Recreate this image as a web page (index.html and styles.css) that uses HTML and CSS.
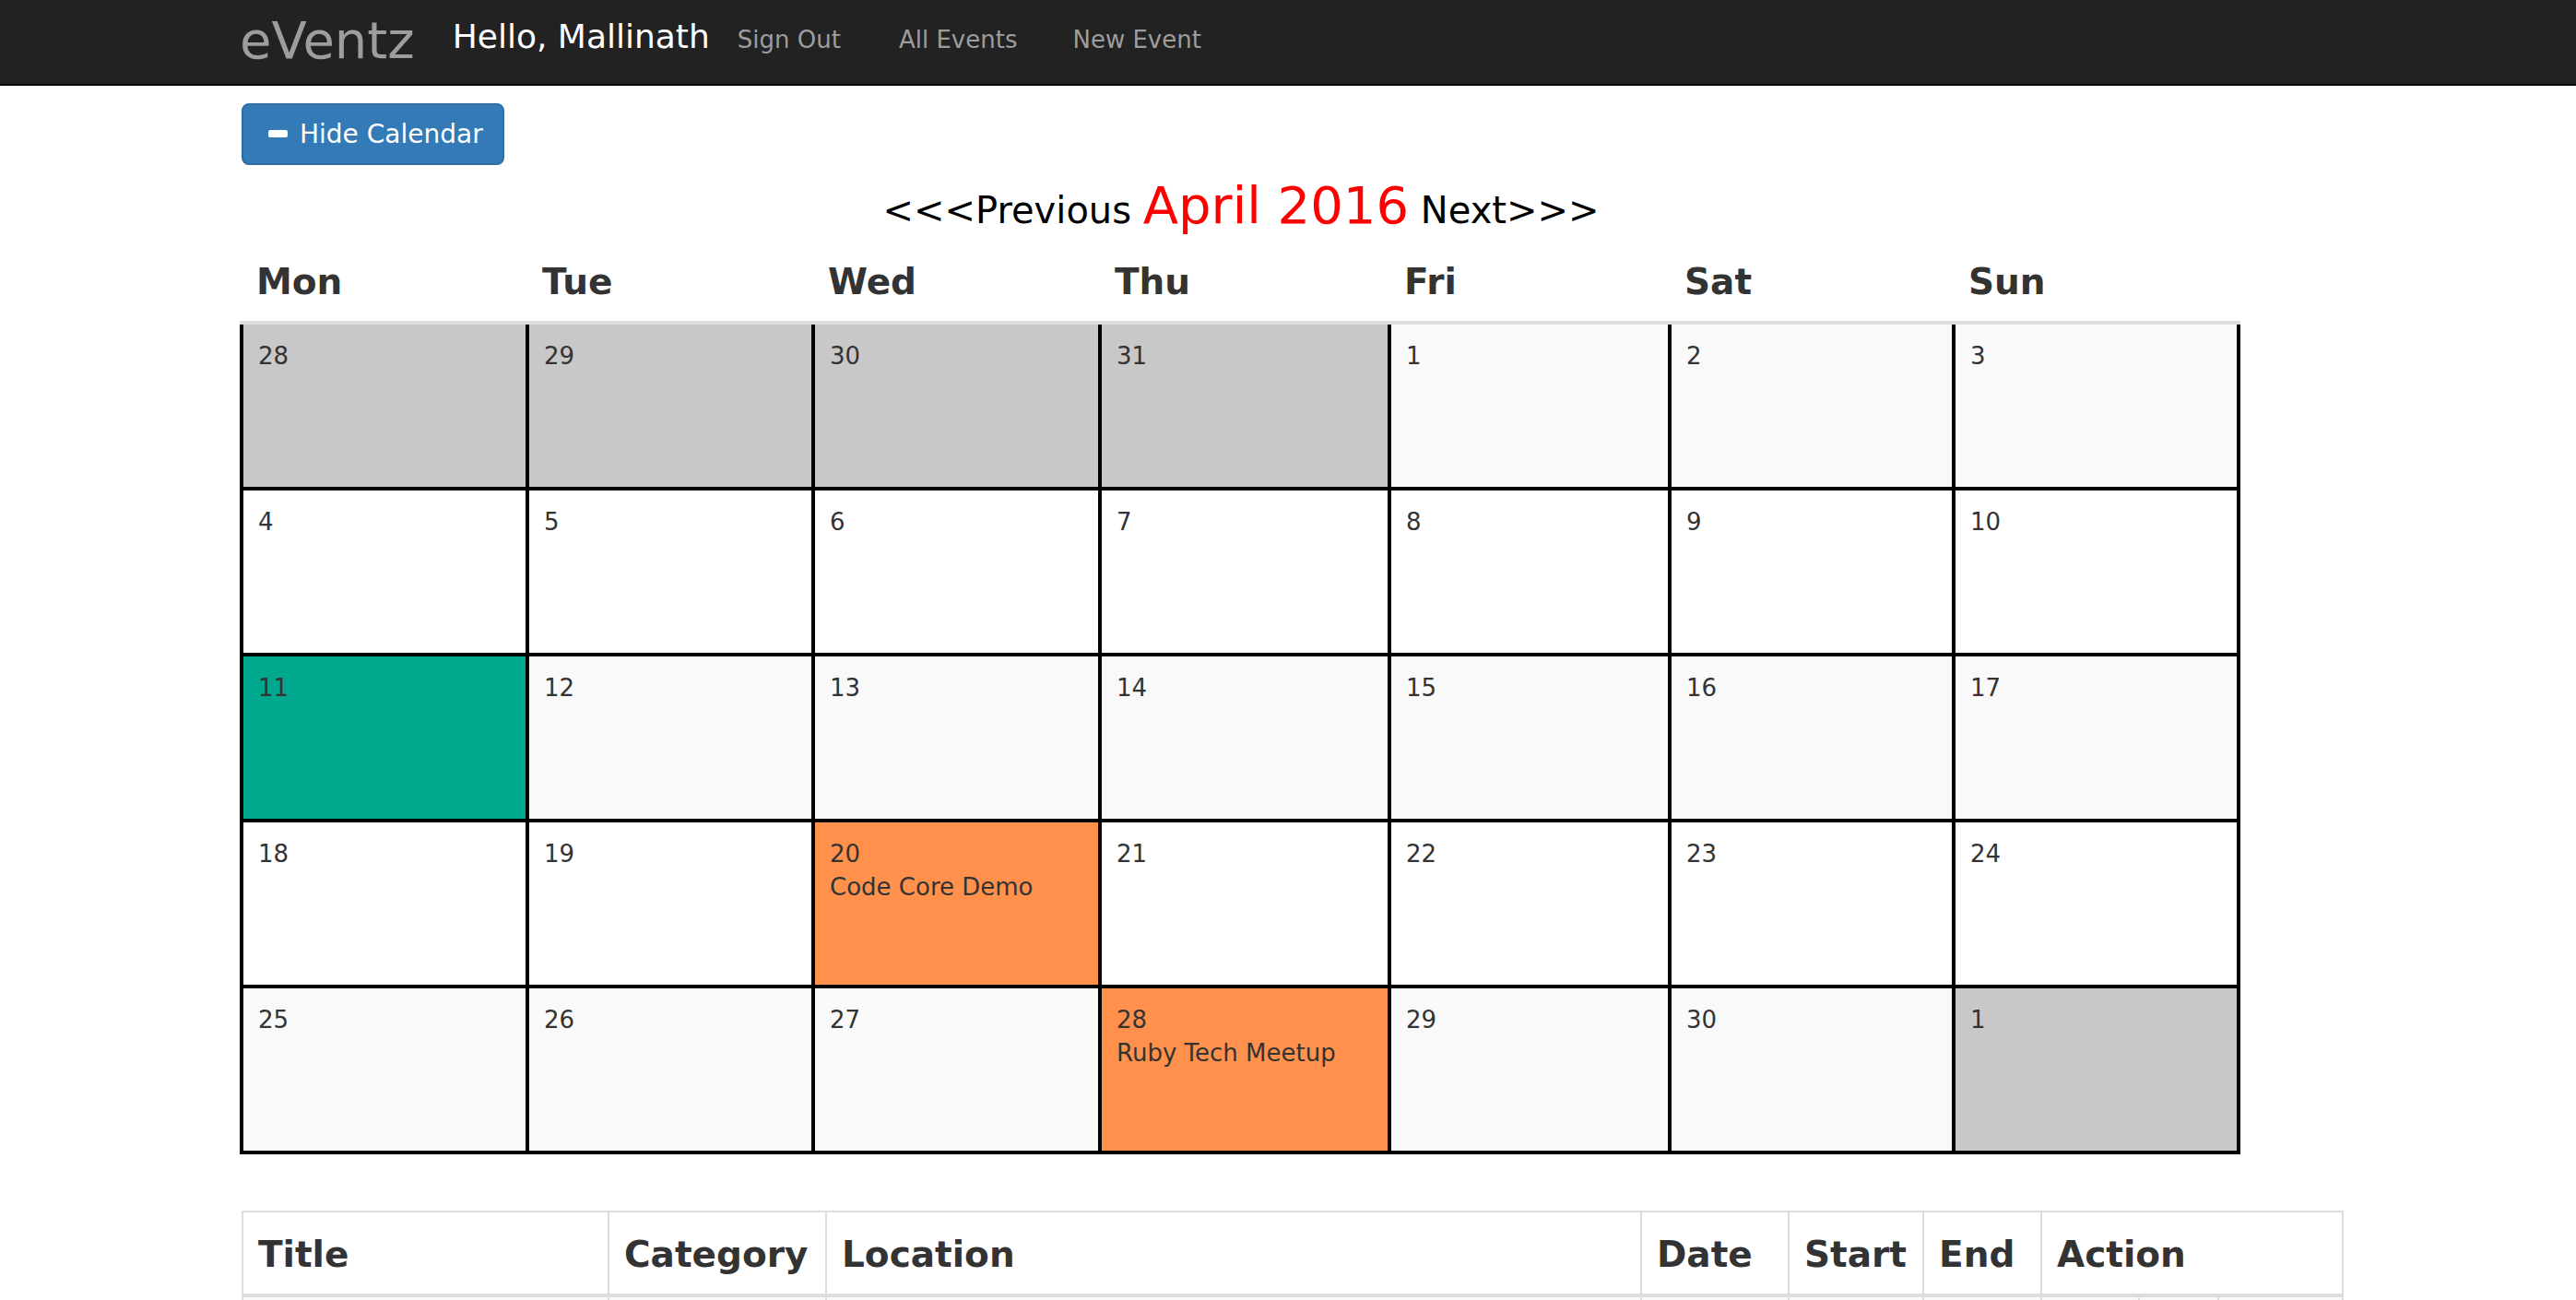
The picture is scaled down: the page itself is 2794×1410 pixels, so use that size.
FILE: index.html
```html
<!DOCTYPE html>
<html lang="en">
<head>
<meta charset="utf-8">
<title>eVentz</title>
<link rel="stylesheet" href="styles.css">
</head>
<body>
<nav class="navbar">
  <div class="nav-inner">
    <a class="brand" href="#">eVentz</a>
    <span class="hello">Hello, Mallinath</span>
    <a class="nav-link nav-first" href="#">Sign Out</a>
    <a class="nav-link" href="#">All Events</a>
    <a class="nav-link" href="#">New Event</a>
  </div>
</nav>
<main class="container">
  <div class="toolbar">
    <button class="btn-toggle" type="button"><span class="icon-minus"></span>Hide Calendar</button>
  </div>
  <div class="calendar">
    <h2 class="cal-title"><a class="cal-nav" href="#">&lt;&lt;&lt;Previous</a> <span class="month">April 2016</span> <a class="cal-nav" href="#">Next&gt;&gt;&gt;</a></h2>
    <table class="cal">
      <colgroup>
        <col class="cw1"><col class="cw2"><col class="cw3"><col class="cw4"><col class="cw5"><col class="cw6"><col class="cw7">
      </colgroup>
      <thead>
        <tr><th>Mon</th><th>Tue</th><th>Wed</th><th>Thu</th><th>Fri</th><th>Sat</th><th>Sun</th></tr>
      </thead>
      <tbody>
        <tr>
          <td class="other"><div class="day">28</div></td>
          <td class="other"><div class="day">29</div></td>
          <td class="other"><div class="day">30</div></td>
          <td class="other"><div class="day">31</div></td>
          <td><div class="day">1</div></td>
          <td><div class="day">2</div></td>
          <td><div class="day">3</div></td>
        </tr>
        <tr>
          <td><div class="day">4</div></td>
          <td><div class="day">5</div></td>
          <td><div class="day">6</div></td>
          <td><div class="day">7</div></td>
          <td><div class="day">8</div></td>
          <td><div class="day">9</div></td>
          <td><div class="day">10</div></td>
        </tr>
        <tr>
          <td class="today"><div class="day">11</div></td>
          <td><div class="day">12</div></td>
          <td><div class="day">13</div></td>
          <td><div class="day">14</div></td>
          <td><div class="day">15</div></td>
          <td><div class="day">16</div></td>
          <td><div class="day">17</div></td>
        </tr>
        <tr>
          <td><div class="day">18</div></td>
          <td><div class="day">19</div></td>
          <td class="event"><div class="day">20<br>Code Core Demo</div></td>
          <td><div class="day">21</div></td>
          <td><div class="day">22</div></td>
          <td><div class="day">23</div></td>
          <td><div class="day">24</div></td>
        </tr>
        <tr>
          <td><div class="day">25</div></td>
          <td><div class="day">26</div></td>
          <td><div class="day">27</div></td>
          <td class="event"><div class="day">28<br>Ruby Tech Meetup</div></td>
          <td><div class="day">29</div></td>
          <td><div class="day">30</div></td>
          <td class="other"><div class="day">1</div></td>
        </tr>
      </tbody>
    </table>
  </div>

  <table class="events">
    <colgroup>
      <col class="ew1"><col class="ew2"><col class="ew3"><col class="ew4"><col class="ew5"><col class="ew6"><col class="ew7"><col class="ew8"><col class="ew9">
    </colgroup>
    <thead>
      <tr>
        <th>Title</th><th>Category</th><th>Location</th><th>Date</th><th>Start</th><th>End</th><th colspan="3">Action</th>
      </tr>
    </thead>
    <tbody>
      <tr>
        <td></td><td></td><td></td><td></td><td></td><td></td><td></td><td></td><td></td>
      </tr>
    </tbody>
  </table>
</main>
</body>
</html>
```

FILE: styles.css
```css
html, body {
  margin: 0;
  padding: 0;
  background: #fff;
}

body {
  font-family: "DejaVu Sans", Verdana, sans-serif;
  color: #333;
  font-size: 26px;
  line-height: 36px;
}

a {
  text-decoration: none;
}

/* ---------- Navbar ---------- */
.navbar {
  background: #222;
  border-bottom: 2px solid #080808;
  height: 91px;
}

.nav-inner {
  display: flex;
  align-items: flex-start;
  height: 91px;
  padding-left: 260px;
}

.brand {
  color: #9d9d9d;
  font-size: 56px;
  line-height: 56px;
  margin-top: 16px;
  margin-right: 41px;
}

.hello {
  color: #fff;
  font-size: 36px;
  line-height: 36px;
  margin-top: 22px;
  margin-right: 0;
}

.nav-link {
  color: #9d9d9d;
  font-size: 26px;
  line-height: 26px;
  margin-top: 30px;
  padding: 0 30px;
}

.nav-first {
  padding-right: 33px;
}

/* ---------- Page ---------- */
.container {
  padding-left: 262px;
  width: 2280px;
}

.toolbar {
  display: flex;
  margin-top: 19px;
}

.btn-toggle {
  display: inline-flex;
  align-items: center;
  height: 67px;
  box-sizing: border-box;
  padding: 0 21px 0 27px;
  background: #337ab7;
  border: 2px solid #2e6da4;
  border-radius: 8px;
  color: #fff;
  font-family: "DejaVu Sans", Verdana, sans-serif;
  font-size: 28px;
  line-height: 28px;
  cursor: pointer;
}

.icon-minus {
  display: inline-block;
  width: 21px;
  height: 8px;
  background: #fff;
  border-radius: 2px;
  margin-right: 13px;
  margin-top: -2px;
}

/* ---------- Calendar ---------- */
.calendar {
  width: 2168px;
}

.cal-title {
  margin: 16px 0 4px;
  text-align: center;
  font-weight: normal;
  font-size: 40px;
  line-height: 56px;
  color: #000;
}

.cal-nav {
  color: #000;
}

.month {
  color: #ff0000;
  font-size: 56px;
  line-height: 56px;
}

.cal {
  width: 2166px;
  margin-left: -2px;
  border-collapse: collapse;
  table-layout: fixed;
}

.cw1 { width: 310px; }
.cw2 { width: 310px; }
.cw3 { width: 311px; }
.cw4 { width: 314px; }
.cw5 { width: 304px; }
.cw6 { width: 308px; }
.cw7 { width: 309px; }

.cal th {
  text-align: left;
  vertical-align: bottom;
  font-size: 39px;
  line-height: 56px;
  font-weight: bold;
  color: #333;
  padding: 18px 16px 14px;
  border-bottom: 4px solid #ddd;
}

.cal td {
  border: 4px solid #000;
  padding: 16px;
  vertical-align: top;
  font-size: 26px;
  line-height: 36px;
  color: #333;
}

.cal tbody tr:first-child td {
  border-top: 4px solid #ddd;
}

.cal tbody tr:nth-child(odd) td {
  background: #f9f9f9;
}

.cal .day {
  height: 144px;
  white-space: nowrap;
}

.cal tbody tr td.other {
  background: #c8c8c8;
}

.cal tbody tr td.today {
  background: #00a88e;
}

.cal tbody tr td.event {
  background: #ff914d;
}

/* ---------- Events table ---------- */
.events {
  margin-top: 61px;
  width: 2280px;
  border-collapse: collapse;
  table-layout: fixed;
  border: 2px solid #ddd;
}

.ew1 { width: 397px; }
.ew2 { width: 236px; }
.ew3 { width: 884px; }
.ew4 { width: 160px; }
.ew5 { width: 146px; }
.ew6 { width: 128px; }
.ew7 { width: 106px; }
.ew8 { width: 86px; }
.ew9 { width: 135px; }

.events th {
  text-align: left;
  vertical-align: bottom;
  font-size: 39px;
  line-height: 56px;
  font-weight: bold;
  color: #333;
  padding: 18px 16px 14px;
  border: 2px solid #ddd;
  border-bottom: 4px solid #ddd;
  background: #fff;
}

.events td {
  border: 2px solid #ddd;
  padding: 16px;
  height: 40px;
  vertical-align: top;
  background: #f9f9f9;
}
```
